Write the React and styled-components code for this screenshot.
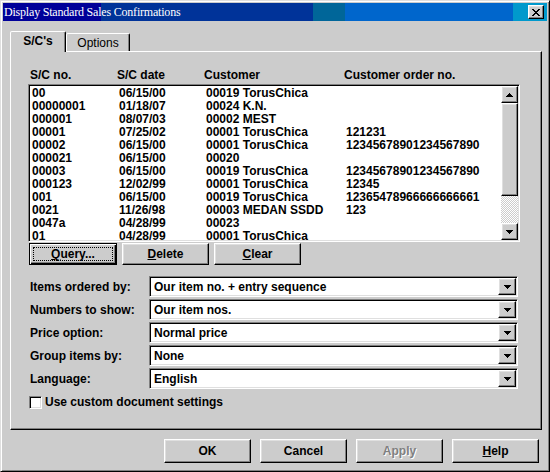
import styled, { createGlobalStyle } from "styled-components";

const GlobalStyle = createGlobalStyle`
  html, body {
    margin: 0;
    padding: 0;
    background: #cccccc;
  }
`;

const raised = `
  border: 1px solid;
  border-color: #ffffff #000000 #000000 #ffffff;
  box-shadow: inset -1px -1px #808080, inset 1px 1px #dfdfdf;
`;

const sunken = `
  border: 1px solid;
  border-color: #808080 #ffffff #ffffff #808080;
  box-shadow: inset 1px 1px #000000, inset -1px -1px #dfdfdf;
`;

const Janela = styled.div`
  width: 550px;
  height: 472px;
  box-sizing: border-box;
  background: #cccccc;
  border: 1px solid;
  border-color: #dfdfdf #000000 #000000 #dfdfdf;
  box-shadow: inset 1px 1px #ffffff, inset -1px -1px #808080;
  padding: 2px;
  display: flex;
  flex-direction: column;
  font-family: "Liberation Sans", Arial, sans-serif;
  font-size: 12px;
  font-weight: bold;
  color: #000000;
`;

const BarraTitulo = styled.div`
  height: 18px;
  display: flex;
  align-items: center;
  justify-content: space-between;
  padding: 0 3px 0 1px;
  background: linear-gradient(
    to right,
    #000099 0 98px,
    #003399 98px 310px,
    #006699 310px 342px,
    #0066cc 342px 510px,
    #0099cc 510px
  );
`;

const TextoTitulo = styled.span`
  font-family: "Liberation Serif", "Times New Roman", serif;
  font-weight: normal;
  font-size: 12px;
  letter-spacing: -0.2px;
  color: #ffffff;
`;

const BotaoFechar = styled.div`
  width: 16px;
  height: 14px;
  box-sizing: border-box;
  background: #cccccc;
  ${raised}
  display: flex;
  align-items: center;
  justify-content: center;
`;

const Corpo = styled.div`
  flex: 1;
  display: flex;
  flex-direction: column;
  padding: 10px 5px 0 7px;
`;

const LinhaAbas = styled.div`
  height: 20px;
  display: flex;
  align-items: flex-end;
`;

const Aba = styled.div`
  position: relative;
  z-index: ${(p) => (p.$ativa ? 1 : 0)};
  box-sizing: border-box;
  width: ${(p) => p.$largura}px;
  height: ${(p) => (p.$ativa ? 21 : 18)}px;
  margin-bottom: ${(p) => (p.$ativa ? -1 : 0)}px;
  background: #cccccc;
  border: 1px solid;
  border-bottom: none;
  border-color: #ffffff #000000 transparent #ffffff;
  border-radius: 2px 2px 0 0;
  box-shadow: inset -1px 0 #808080;
  display: flex;
  align-items: center;
  justify-content: center;
  padding-bottom: ${(p) => (p.$ativa ? 2 : 0)}px;
  font-weight: ${(p) => (p.$ativa ? "bold" : "normal")};
`;

const Painel = styled.div`
  box-sizing: border-box;
  height: 379px;
  border: 1px solid;
  border-color: #ffffff #000000 #000000 #ffffff;
  box-shadow: inset -1px -1px #808080;
  padding: 17px 0 0 17px;
  display: flex;
  flex-direction: column;
`;

const Grade = styled.div`
  display: grid;
  grid-template-columns: 87px 87px 140px 1fr;
  height: 13px;
  line-height: 13px;
  padding-left: 2px;
  white-space: nowrap;
`;

const Cabecalho = styled(Grade)`
  width: 490px;
  margin-bottom: 2px;
`;

const Lista = styled.div`
  width: 492px;
  height: 158px;
  box-sizing: border-box;
  background: #ffffff;
  ${sunken}
  display: flex;
`;

const Linhas = styled.div`
  flex: 1;
  overflow: hidden;
  padding-top: 1px;
  margin: 1px 0 1px 1px;
`;

const BarraRolagem = styled.div`
  width: 17px;
  margin: 1px 1px 1px 0;
  display: flex;
  flex-direction: column;
`;

const BotaoSeta = styled.div`
  height: 17px;
  box-sizing: border-box;
  background: #cccccc;
  ${raised}
  display: flex;
  align-items: center;
  justify-content: center;
`;

const Polegar = styled.div`
  height: 93px;
  box-sizing: border-box;
  background: #cccccc;
  ${raised}
`;

const Trilha = styled.div`
  flex: 1;
  background: repeating-conic-gradient(#ffffff 0 25%, #cccccc 0 50%) 0 0 / 2px 2px;
`;

const LinhaBotoes = styled.div`
  display: flex;
  gap: 5px;
  margin: 1px 0 0 1px;
`;

const Botao = styled.button`
  width: ${(p) => p.$largura || 87}px;
  height: ${(p) => p.$altura || 22}px;
  box-sizing: border-box;
  padding: 0;
  background: #cccccc;
  font: inherit;
  color: ${(p) => (p.disabled ? "#808080" : "#000000")};
  text-shadow: ${(p) => (p.disabled ? "1px 1px #ffffff" : "none")};
  ${raised}
  display: flex;
  align-items: center;
  justify-content: center;
  ${(p) =>
    p.$padrao &&
    `
    border: 1px solid #000000;
    box-shadow: inset 1px 1px #ffffff, inset -1px -1px #000000, inset -2px -2px #808080;
    padding: 3px;
  `}
`;

const Foco = styled.span`
  flex: 1;
  align-self: stretch;
  border: 1px dotted #000000;
  display: flex;
  align-items: center;
  justify-content: center;
`;

const Opcoes = styled.div`
  display: flex;
  flex-direction: column;
  gap: 2px;
  margin-top: 11px;
`;

const LinhaOpcao = styled.div`
  display: flex;
  align-items: center;
`;

const Rotulo = styled.span`
  width: 119px;
  padding-left: 2px;
`;

const Combo = styled.div`
  width: 369px;
  height: 21px;
  box-sizing: border-box;
  background: #ffffff;
  ${sunken}
  display: flex;
  align-items: center;
  padding: 0 1px 0 4px;
`;

const TextoCombo = styled.span`
  flex: 1;
`;

const BotaoCombo = styled.div`
  width: 18px;
  height: 17px;
  box-sizing: border-box;
  background: #cccccc;
  ${raised}
  display: flex;
  align-items: center;
  justify-content: center;
`;

const LinhaCheck = styled.label`
  display: flex;
  align-items: center;
  gap: 3px;
  margin: 6px 0 0 1px;
`;

const Caixa = styled.span`
  width: 13px;
  height: 13px;
  box-sizing: border-box;
  background: #ffffff;
  ${sunken}
`;

const Rodape = styled.div`
  display: flex;
  justify-content: flex-end;
  gap: 9px;
  margin-top: 9px;
  padding-right: 3px;
`;

const Seta = ({ cima }) => (
  <svg width="7" height="4" viewBox="0 0 7 4" shapeRendering="crispEdges">
    <polygon
      points={cima ? "3.5,0 7,4 0,4" : "0,0 7,0 3.5,4"}
      fill="#000000"
    />
  </svg>
);

const dados = [
  ["00", "06/15/00", "00019 TorusChica", ""],
  ["00000001", "01/18/07", "00024 K.N.", ""],
  ["000001", "08/07/03", "00002 MEST", ""],
  ["00001", "07/25/02", "00001 TorusChica", "121231"],
  ["00002", "06/15/00", "00001 TorusChica", "12345678901234567890"],
  ["000021", "06/15/00", "00020", ""],
  ["00003", "06/15/00", "00019 TorusChica", "12345678901234567890"],
  ["000123", "12/02/99", "00001 TorusChica", "12345"],
  ["001", "06/15/00", "00019 TorusChica", "12365478966666666661"],
  ["0021", "11/26/98", "00003 MEDAN SSDD", "123"],
  ["0047a", "04/28/99", "00023", ""],
  ["01", "04/28/99", "00001 TorusChica", ""],
];

const opcoes = [
  ["Items ordered by:", "Our item no. + entry sequence"],
  ["Numbers to show:", "Our item nos."],
  ["Price option:", "Normal price"],
  ["Group items by:", "None"],
  ["Language:", "English"],
];

export default function App() {
  return (
    <>
      <GlobalStyle />
      <Janela>
        <BarraTitulo>
          <TextoTitulo>Display Standard Sales Confirmations</TextoTitulo>
          <BotaoFechar>
            <svg width="8" height="7" viewBox="0 0 8 7" shapeRendering="crispEdges">
              <path d="M0 0h2l2 2.5L6 0h2L5 3.5 8 7H6L4 4.5 2 7H0l3-3.5z" fill="#000000" />
            </svg>
          </BotaoFechar>
        </BarraTitulo>
        <Corpo>
          <LinhaAbas>
            <Aba $ativa $largura={56}>S/C's</Aba>
            <Aba $largura={64}>Options</Aba>
          </LinhaAbas>
          <Painel>
            <Cabecalho>
              <span>S/C no.</span>
              <span>S/C date</span>
              <span>Customer</span>
              <span>Customer order no.</span>
            </Cabecalho>
            <Lista>
              <Linhas>
                {dados.map((linha) => (
                  <Grade key={linha[0]}>
                    {linha.map((celula, i) => (
                      <span key={i}>{celula}</span>
                    ))}
                  </Grade>
                ))}
              </Linhas>
              <BarraRolagem>
                <BotaoSeta>
                  <Seta cima />
                </BotaoSeta>
                <Polegar />
                <Trilha />
                <BotaoSeta>
                  <Seta />
                </BotaoSeta>
              </BarraRolagem>
            </Lista>
            <LinhaBotoes>
              <Botao $padrao $largura={88}>
                <Foco>
                  <span>
                    <u>Q</u>uery...
                  </span>
                </Foco>
              </Botao>
              <Botao>
                <span>
                  <u>D</u>elete
                </span>
              </Botao>
              <Botao>
                <span>
                  <u>C</u>lear
                </span>
              </Botao>
            </LinhaBotoes>
            <Opcoes>
              {opcoes.map(([rotulo, valor]) => (
                <LinhaOpcao key={rotulo}>
                  <Rotulo>{rotulo}</Rotulo>
                  <Combo>
                    <TextoCombo>{valor}</TextoCombo>
                    <BotaoCombo>
                      <Seta />
                    </BotaoCombo>
                  </Combo>
                </LinhaOpcao>
              ))}
            </Opcoes>
            <LinhaCheck>
              <Caixa />
              <span>Use custom document settings</span>
            </LinhaCheck>
          </Painel>
          <Rodape>
            <Botao $altura={24}>OK</Botao>
            <Botao $altura={24}>Cancel</Botao>
            <Botao $altura={24} disabled>
              Apply
            </Botao>
            <Botao $altura={24}>
              <span>
                <u>H</u>elp
              </span>
            </Botao>
          </Rodape>
        </Corpo>
      </Janela>
    </>
  );
}
